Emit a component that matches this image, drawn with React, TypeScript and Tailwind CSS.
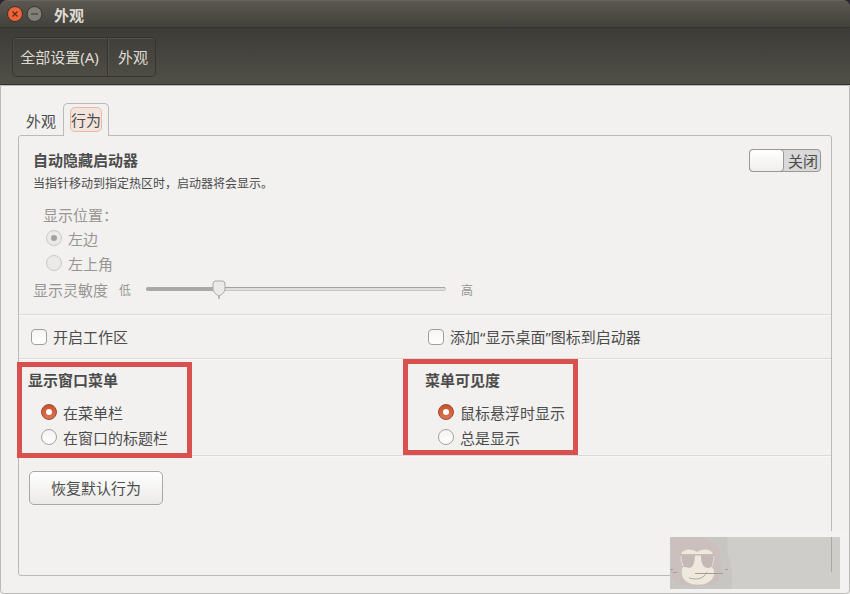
import React from "react";
import clsx from "clsx";

interface RadioProps {
  label: string;
  checked?: boolean;
  disabled?: boolean;
}

function Radio({ label, checked, disabled }: RadioProps) {
  return (
    <label className="flex h-[25px] items-center">
      <span
        className={clsx(
          "mb-[3px] flex size-4 shrink-0 items-center justify-center rounded-full border",
          disabled && "border-[#cbc9c6] bg-[#ebeae8]",
          !disabled && checked && "border-[#9c4a30] bg-linear-to-b from-[#c9512a] to-[#dc7554]",
          !disabled && !checked && "border-[#a3a19e] bg-linear-to-b from-[#f4f3f2] to-white"
        )}
      >
        {checked && (
          <span
            className={clsx(
              "size-1.5 rounded-full",
              disabled ? "bg-[#a3a19e]" : "bg-white"
            )}
          />
        )}
      </span>
      <span className={clsx("ml-1.5", disabled && "text-[#989693]")}>{label}</span>
    </label>
  );
}

function Checkbox({ label }: { label: string }) {
  return (
    <label className="flex items-center">
      <span className="size-4 rounded-[4px] border border-[#a19f9c] bg-linear-to-b from-[#f6f5f4] to-white" />
      <span className="ml-1.5 pt-0.5">{label}</span>
    </label>
  );
}

function TitleBar() {
  return (
    <div className="bg-[#2b2431]">
      <div className="flex h-7 items-center rounded-t-[7px] border-t border-b border-t-[#66645c] border-b-[#33322e] bg-linear-to-b from-[#5a5850] to-[#42413b]">
        <svg className="ml-[7px]" width="36" height="16" viewBox="0 0 36 16">
          <circle cx="8" cy="8" r="7.5" fill="#ee6439" stroke="#39322c" />
          <path d="M5.5 5.5l5 5M10.5 5.5l-5 5" stroke="#60281a" strokeWidth="1.2" />
          <circle cx="27.5" cy="8" r="7.5" fill="#817f78" stroke="#34332e" />
          <path d="M24 8h7" stroke="#403f39" strokeWidth="1.2" />
        </svg>
        <span className="ml-[11px] pt-0.5 text-[15px] font-bold text-[#dfdbd2]">外观</span>
      </div>
    </div>
  );
}

function Toolbar() {
  return (
    <div className="flex h-[57px] border-b border-[#32312c] bg-linear-to-b from-[#3c3b37] to-[#504f47] pt-[9px] pl-3 text-[15px] text-[#dfdbd2]">
      <button className="h-10 w-24 rounded-l-[5px] border border-[#353430] pr-px shadow-[inset_0_1px_#52514a,inset_1px_0_#4c4b45]">
        全部设置(A)
      </button>
      <button className="h-10 w-12 rounded-r-[5px] border border-l-0 border-[#353430] pl-[3px] shadow-[inset_0_1px_#52514a,inset_1px_0_#52514a]">
        外观
      </button>
    </div>
  );
}

function Slider() {
  return (
    <svg width="302" height="22" viewBox="0 0 302 22">
      <rect x="1.5" y="9.5" width="299" height="3" rx="1.5" fill="#e0dfdc" stroke="#c9c7c4" />
      <path d="M2 9.5h298" stroke="#a5a3a0" />
      <path d="M3 11h71" stroke="#aaa8a5" strokeWidth="4" strokeLinecap="round" />
      <path
        d="M70.5 3h7q2.500 0 2.500 3v5c0 3-3 5.500-6 7-3-1.500-6-4-6-7V6q0-3 2.500-3Z"
        fill="#ebeae8"
        stroke="#aaa8a5"
      />
      <path d="M74 18v3" stroke="#888683" />
    </svg>
  );
}

function Watermark() {
  return (
    <div className="absolute top-[531px] left-[670px] h-[60px] w-[178px] bg-[#f3f2f0] pt-1.5">
      <div className="h-[52px] w-[170px] bg-[#cecdca]">
        <svg width="170" height="52" viewBox="0 0 170 52">
          <path d="M0 0h57l1 18q5 10 4 34H0Z" fill="#c7c6c3" />
          <path d="M0 2q14-4 36 0 16 5 14 21 5 19-9 26H9Q-2 41 2 24Z" fill="#cbc0bd" />
          <path d="M11 17c2-5 10-6 16-2 6-4 14-3 16 2Z" fill="#eee8dd" />
          <path
            d="M25 18h6c0 6 1 10 6 13l5-1q3 4 2 8c-3 13-29 13-32 0q-1-5 1-8h5c6-2 7-6 7-12Z"
            fill="#eee8dd"
          />
          <path d="M12 19h12q1 12-5 12-8-1-7-12ZM31 19h12q1 12-5 12-7 0-7-12Z" fill="#c5b9b5" />
          <path d="M11 19q0 6 2 10M44 19q0 6-2 10" fill="none" stroke="#e4ddd4" />
          <path d="M10 18h34" stroke="#c5b9b5" />
          <path d="M19 41q13 4 18-6" fill="none" stroke="#b5aca4" />
          <path d="M25 36.500h28M3 35.500h4M0 32.500h3M55 32.500h3" stroke="#a19d99" />
          <path d="M161.500 0v35" stroke="#aaa8a5" />
        </svg>
      </div>
    </div>
  );
}

export default function App() {
  return (
    <div className="relative flex h-[594px] w-[850px] flex-col overflow-hidden bg-[#f2f1f0] font-['Noto_Sans','Noto_Sans_CJK_SC',sans-serif] text-[15px] leading-none text-[#4c4c4c]">
      <TitleBar />
      <Toolbar />
      <main className="flex-1 rounded-b-[4px] border border-[#bcbab8] px-[17px] pt-[17px]">
        <div className="flex h-8">
          <div className="w-[45px] pt-[11px] pl-2">外观</div>
          <div className="relative z-10 -mb-px h-[33px] w-[46px] rounded-t-[5px] border border-b-0 border-[#bcbab8] bg-[#f2f1f0] pt-[3px] pl-1.5">
            <div className="flex h-[25px] w-8 items-center justify-center rounded-[5px] border border-[#e9b9a7] bg-[#f3e4de] pt-px whitespace-nowrap">
              行为
            </div>
          </div>
        </div>
        <div className="h-[441px] w-[814px] rounded-[3px] border border-[#bcbab8]">
          <section className="h-[179px] border-b border-[#dcdad8] pt-4 pl-3.5 shadow-[0_1px_#f9f8f8]">
            <div className="flex justify-between">
              <div>
                <h2 className="pt-px font-bold">自动隐藏启动器</h2>
                <p className="mt-2.5 text-[12px]">当指针移动到指定热区时，启动器将会显示。</p>
              </div>
              <div className="-mt-[3px] mr-2.5 flex h-[23px] w-[72px] rounded-[4px] border border-[#9b9996] bg-[#d8d9d8]">
                <span className="-my-px -ml-px w-[35px] rounded-[4px] border border-[#9b9996] bg-linear-to-b from-white to-[#efeeec]" />
                <span className="pt-1 pl-1">关闭</span>
              </div>
            </div>
            <div className="pt-[18px] pl-2.5 text-[#989693]">显示位置：</div>
            <div className="mt-1 pl-[13px]">
              <Radio label="左边" checked disabled />
              <Radio label="左上角" disabled />
            </div>
            <div className="mt-px flex items-center text-[#989693]">
              <span className="pt-0.5">显示灵敏度</span>
              <span className="mr-3.5 ml-[11px] pt-1 text-[12px]">低</span>
              <Slider />
              <span className="ml-3.5 pt-1 text-[12px]">高</span>
            </div>
          </section>
          <section className="flex h-11 items-center border-b border-[#dcdad8] pl-3 shadow-[0_1px_#f9f8f8]">
            <div className="w-[397px]">
              <Checkbox label="开启工作区" />
            </div>
            <Checkbox label="添加“显示桌面”图标到启动器" />
          </section>
          <section className="flex h-[97px] border-b border-[#dcdad8] shadow-[0_1px_#f9f8f8]">
            <div className="mt-[3px] -ml-0.5 h-24 w-[175px] border-[5px] border-[#d9514e] pt-1.5 pl-1.5">
              <h2 className="font-bold">显示窗口菜单</h2>
              <div className="mt-[13px] pl-[13px]">
                <Radio label="在菜单栏" checked />
                <Radio label="在窗口的标题栏" />
              </div>
            </div>
            <div className="ml-[211px] h-24 w-[175px] border-[5px] border-[#d9514e] pt-[9px] pl-[17px]">
              <h2 className="font-bold">菜单可见度</h2>
              <div className="mt-[13px] pl-[13px]">
                <Radio label="鼠标悬浮时显示" checked />
                <Radio label="总是显示" />
              </div>
            </div>
          </section>
          <button className="mt-[15px] ml-2.5 h-[34px] w-[134px] rounded-[5px] border border-[#aaa8a5] bg-linear-to-b from-white to-[#ebeae8]">
            恢复默认行为
          </button>
        </div>
      </main>
      <Watermark />
    </div>
  );
}
